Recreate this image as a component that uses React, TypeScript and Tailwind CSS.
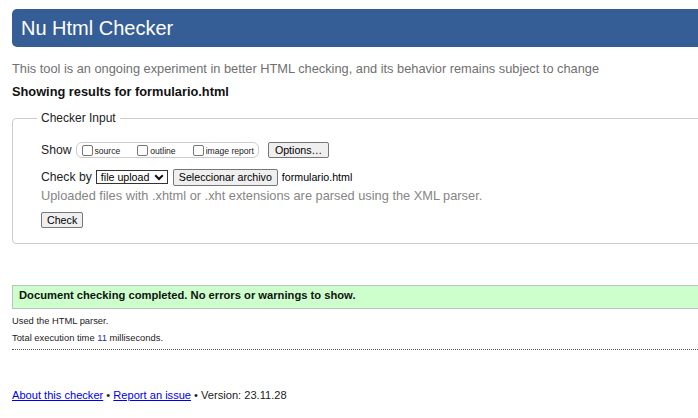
import React from "react";

function Box({ label }: { label: string }) {
  return (
    <label className="flex items-end">
      <input
        type="checkbox"
        className="appearance-none w-[11px] h-[11px] border border-[#767676] rounded-[2px] bg-white m-0"
      />
      <span className="ml-[2px] text-[8.6px] leading-[10px] text-[#222]">{label}</span>
    </label>
  );
}

export default function App() {
  return (
    <div className="w-[698px] h-[418px] overflow-hidden bg-white font-['Liberation_Sans',Arial,sans-serif] text-[#222]">
      <div className="pl-3 w-[760px]">
        <div className="mt-[9px] h-[38px] rounded-l-[5px] bg-[#365e96] pl-[9px] text-[20px] leading-[38px] text-white">
          Nu Html Checker
        </div>
        <p className="mt-[14px] text-[12.8px] leading-[16px] text-[#707070]">
          This tool is an ongoing experiment in better HTML checking, and its behavior remains subject to change
        </p>
        <p className="mt-[7px] text-[12.8px] leading-[16px] font-bold text-[#111]">
          Showing results for formulario.html
        </p>
        <fieldset className="mt-[10px] border border-[#cccccc] rounded-[4px] pl-[24px] pb-[15px]">
          <legend className="px-[4px] text-[12px] leading-[16px] text-[#222]">Checker Input</legend>
          <div className="pl-[4px]">
            <div className="mt-[15px] h-[18px] flex items-center text-[12.2px]">
              <span className="leading-[18px]">Show</span>
              <div className="ml-[4px] h-[16px] flex items-center border border-[#cccccc] rounded-[6px] pl-[5px] pr-[4px]">
                <Box label="source" />
                <span className="w-[17px]" />
                <Box label="outline" />
                <span className="w-[17px]" />
                <Box label="image report" />
              </div>
              <button className="ml-[9px] h-[16px] px-[6px] border border-[#767676] rounded-[2px] bg-[#efefef] text-[10.67px] leading-[14px] text-black">
                Options…
              </button>
            </div>
            <div className="mt-[9px] h-[18px] flex items-center text-[12.2px]">
              <span className="leading-[18px]">Check by</span>
              <div className="ml-[4px] h-[14px] w-[72px] flex items-center justify-between border border-[#333] pl-[4px] pr-[3px] text-[10.67px] text-black">
                <span className="leading-[12px]">file upload</span>
                <svg width="10" height="7" viewBox="0 0 10 7">
                  <path d="M1.2 1.2 L5 5 L8.8 1.2" fill="none" stroke="#111" strokeWidth="2" />
                </svg>
              </div>
              <button className="ml-[5px] h-[17px] px-[5px] border border-[#767676] rounded-[2px] bg-[#efefef] text-[10.67px] leading-[15px] text-black">
                Seleccionar archivo
              </button>
              <span className="ml-[4px] text-[10.67px] text-black">formulario.html</span>
            </div>
            <p className="mt-[2px] text-[12.8px] leading-[16px] text-[#858585]">
              Uploaded files with .xhtml or .xht extensions are parsed using the XML parser.
            </p>
            <button className="mt-[8px] block h-[16px] px-[5px] border border-[#767676] rounded-[2px] bg-[#efefef] text-[10.67px] leading-[14px] text-black">
              Check
            </button>
          </div>
        </fieldset>
        <div className="mt-[41px] border border-[#c0c0c0] bg-[#ccffcc] pl-[6px] pt-[2px] pb-[6px]">
          <p className="text-[11.2px] leading-[14px] font-bold text-[#111]">
            Document checking completed. No errors or warnings to show.
          </p>
        </div>
        <p className="mt-[6px] text-[9.35px] leading-[12px] text-[#222]">Used the HTML parser.</p>
        <p className="mt-[5px] text-[9.35px] leading-[12px] text-[#222]">
          Total execution time <span className="text-[#223399]">11</span> milliseconds.
        </p>
        <div className="mt-[5px] border-t border-dotted border-[#555]" />
        <p className="mt-[38px] text-[11.1px] leading-[14px] text-[#222]">
          <a href="#" className="text-[#0000ee] underline">About this checker</a> •{" "}
          <a href="#" className="text-[#0000ee] underline">Report an issue</a> • Version: 23.11.28
        </p>
      </div>
    </div>
  );
}
